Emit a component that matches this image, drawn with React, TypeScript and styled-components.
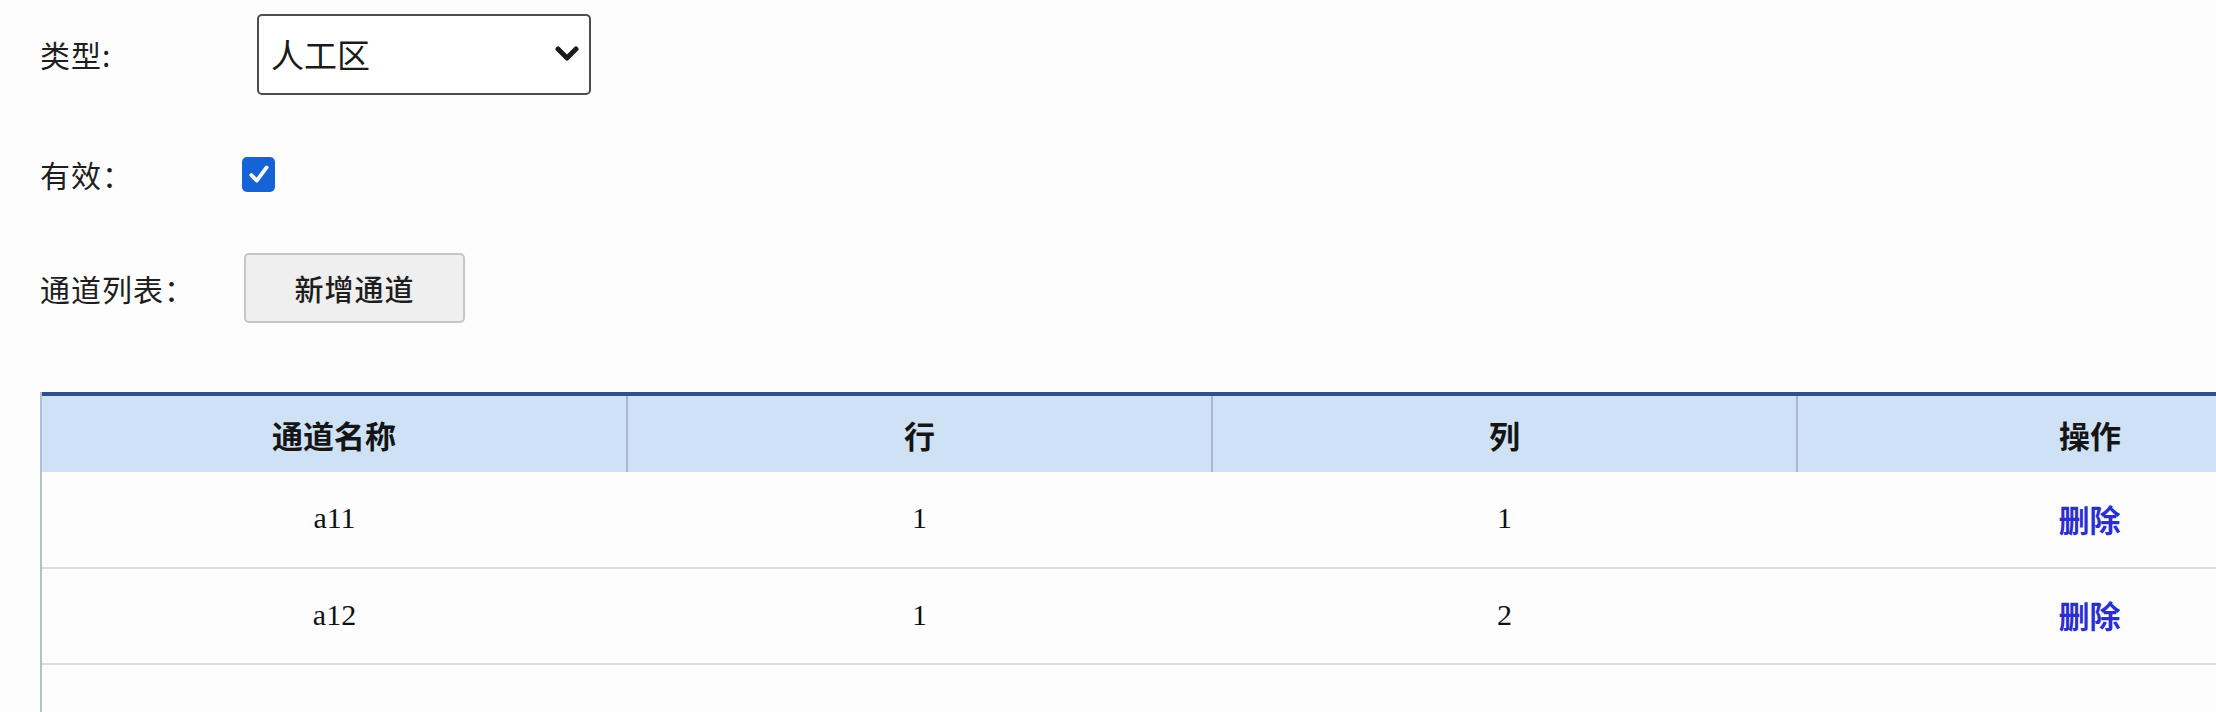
import React, { useState } from 'react';
import styled, { createGlobalStyle } from 'styled-components';

const GlobalStyle = createGlobalStyle`
  html, body {
    margin: 0;
    padding: 0;
    background: #fdfdfd;
    overflow: hidden;
  }
  body {
    font-family: "Noto Sans CJK SC", "Liberation Sans", sans-serif;
    color: #222;
  }
`;

const Page = styled.div`
  padding: 13px 0 0 40px;
  height: 712px;
  box-sizing: border-box;
  display: flex;
  flex-direction: column;
`;

const Form = styled.div`
  display: flex;
  flex-direction: column;
  gap: 54px;
`;

interface FieldRowProps {
  height: number;
}

const FieldRow = styled.div<FieldRowProps>`
  display: flex;
  align-items: center;
  height: ${(p) => p.height}px;
`;

const Label = styled.div`
  width: 200px;
  font-size: 30px;
  line-height: 1;
  color: #1e1e1e;
  letter-spacing: 1px;
`;

interface ControlProps {
  offset: number;
}

const Control = styled.div<ControlProps>`
  margin-left: ${(p) => p.offset - 240}px;
  display: flex;
  align-items: center;
`;

const SelectWrap = styled.div`
  position: relative;
  width: 334px;
  height: 81px;

  svg {
    position: absolute;
    right: 12px;
    top: 31px;
    pointer-events: none;
  }
`;

const Select = styled.select`
  appearance: none;
  width: 100%;
  height: 100%;
  box-sizing: border-box;
  border: 2px solid #4d4d4d;
  border-radius: 5px;
  background: #fff;
  padding: 0 0 0 12px;
  font-family: "Noto Sans CJK SC", sans-serif;
  font-size: 33px;
  color: #1a1a1a;
  outline: none;
`;

const CheckBox = styled.span<{ checked: boolean }>`
  display: inline-flex;
  align-items: center;
  justify-content: center;
  width: 33px;
  height: 35px;
  border-radius: 5px;
  background: ${(p) => (p.checked ? '#1464d8' : '#fff')};
  border: ${(p) => (p.checked ? 'none' : '2px solid #777')};
  cursor: pointer;
`;

const Button = styled.button`
  width: 221px;
  height: 70px;
  background: #efefef;
  border: 2px solid #c6c6c6;
  border-radius: 5px;
  font-family: "Noto Sans CJK SC", sans-serif;
  font-size: 29px;
  font-weight: 500;
  color: #1e1e1e;
  letter-spacing: 1px;
  cursor: pointer;
`;

const TableWrap = styled.div`
  margin-top: 69px;
  flex: 1;
  width: 2340px;
  border-left: 2px solid #b3bfd3;
`;

const Table = styled.table`
  width: 2340px;
  border-collapse: collapse;
  table-layout: fixed;
  border-top: 4px solid #2d5189;
`;

const Th = styled.th`
  height: 76px;
  padding: 0;
  background: #cfe2f5;
  font-size: 31px;
  font-weight: 700;
  color: #151515;
  text-align: center;
  border-right: 2px solid #a9b6cb;

  &:last-child {
    border-right: none;
  }
`;

const Row = styled.tr`
  height: 96px;
  border-bottom: 2px solid #dddddd;
`;

const Td = styled.td`
  padding: 0 0 3px;
  text-align: center;
  font-family: "Liberation Serif", "Noto Sans CJK SC", serif;
  font-size: 30px;
  color: #111;
`;

const DeleteLink = styled.a`
  font-family: "Noto Sans CJK SC", sans-serif;
  font-size: 31px;
  font-weight: 700;
  color: #2b2fd0;
  text-decoration: none;
  cursor: pointer;
`;

const channels = [
  { name: 'a11', row: 1, col: 1 },
  { name: 'a12', row: 1, col: 2 },
];

export default function App() {
  const [valid, setValid] = useState(true);

  return (
    <Page>
      <GlobalStyle />
      <Form>
        <FieldRow height={82}>
          <Label>类型:</Label>
          <Control offset={257}>
            <SelectWrap>
              <Select defaultValue="人工区">
                <option>人工区</option>
              </Select>
              <svg width="24" height="18" viewBox="0 0 24 18">
                <path d="M3 4 L12 13 L21 4" fill="none" stroke="#1a1a1a" strokeWidth="5" strokeLinecap="round" strokeLinejoin="round" />
              </svg>
            </SelectWrap>
          </Control>
        </FieldRow>
        <FieldRow height={50}>
          <Label>有效：</Label>
          <Control offset={242}>
            <CheckBox checked={valid} onClick={() => setValid(!valid)}>
              {valid && (
                <svg width="24" height="24" viewBox="0 0 22 22">
                  <path d="M4 12 L9 17 L18 5" fill="none" stroke="#fff" strokeWidth="3.5" strokeLinecap="round" strokeLinejoin="round" />
                </svg>
              )}
            </CheckBox>
          </Control>
        </FieldRow>
        <FieldRow height={70}>
          <Label>通道列表：</Label>
          <Control offset={244}>
            <Button>新增通道</Button>
          </Control>
        </FieldRow>
      </Form>
      <TableWrap>
        <Table>
          <thead>
            <tr>
              <Th>通道名称</Th>
              <Th>行</Th>
              <Th>列</Th>
              <Th>操作</Th>
            </tr>
          </thead>
          <tbody>
            {channels.map((c) => (
              <Row key={c.name}>
                <Td>{c.name}</Td>
                <Td>{c.row}</Td>
                <Td>{c.col}</Td>
                <Td>
                  <DeleteLink>删除</DeleteLink>
                </Td>
              </Row>
            ))}
          </tbody>
        </Table>
      </TableWrap>
    </Page>
  );
}
